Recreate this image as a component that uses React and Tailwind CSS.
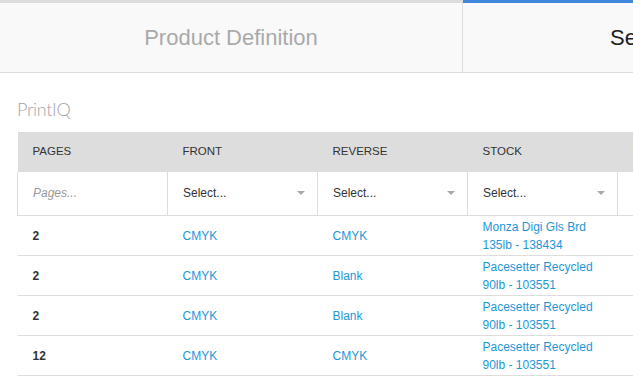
import React from 'react';

const columns = ['Pages', 'Front', 'Reverse', 'Stock', 'Finish'];

const rows = [
    { pages: '2', front: 'CMYK', reverse: 'CMYK', stock: ['Monza Digi Gls Brd', '135lb - 138434'], finish: 'None' },
    { pages: '2', front: 'CMYK', reverse: 'Blank', stock: ['Pacesetter Recycled', '90lb - 103551'], finish: 'None' },
    { pages: '2', front: 'CMYK', reverse: 'Blank', stock: ['Pacesetter Recycled', '90lb - 103551'], finish: 'None' },
    { pages: '12', front: 'CMYK', reverse: 'CMYK', stock: ['Pacesetter Recycled', '90lb - 103551'], finish: 'None' },
];

function SelectCell() {
    return (
        <td className="h-[43px] border-l border-b border-[#dddddd] px-[15px]">
            <div className="flex items-center justify-between text-[12px] text-[#333]">
                <span>Select...</span>
                <span className="mr-[-3px] h-0 w-0 border-l-[4px] border-r-[4px] border-t-[4px] border-l-transparent border-r-transparent border-t-[#aaaaaa]"></span>
            </div>
        </td>
    );
}

export default function App() {
    return (
        <div className="h-[377px] w-full overflow-hidden bg-white" style={{ fontFamily: '"Liberation Sans", Arial, sans-serif' }}>
            <div className="flex h-[73px] border-b border-[#dddddd] bg-[#f9f9f9]">
                <div className="flex w-[463px] shrink-0 items-center justify-center border-t-[3px] border-r border-[#dddddd] text-[22px] text-[#aaaaaa]">
                    Product Definition
                </div>
                <div className="flex w-[463px] shrink-0 items-center border-t-[3px] border-t-[#3f86dc] pl-[147px] text-[22px] text-[#222]">
                    Select Stock
                </div>
            </div>

            <div className="px-[17px] pt-[25px]">
                <div className="mb-[12px] text-[18px] leading-[22px] font-light tracking-[-0.3px] text-[#a3a3a8]" style={{ fontFamily: 'Lato, "Open Sans", sans-serif' }}>
                    PrintIQ
                </div>
                <table className="w-[750px] table-fixed border-collapse">
                    <thead>
                        <tr className="bg-[#dddddd]">
                            {columns.map(c => (
                                <th key={c} className="h-[40px] w-[150px] px-[15px] text-left text-[11.5px] font-normal uppercase text-[#333]">{c}</th>
                            ))}
                        </tr>
                    </thead>
                    <tbody>
                        <tr>
                            <td className="h-[43px] border-l border-b border-[#dddddd] px-[15px] text-[12px] italic text-[#999]">Pages...</td>
                            <SelectCell />
                            <SelectCell />
                            <SelectCell />
                            <SelectCell />
                        </tr>
                        {rows.map((r, i) => (
                            <tr key={i} className="h-[40px] border-b border-[#dddddd] text-[12px]">
                                <td className="px-[15px] pt-[1px] font-bold text-[#333]">{r.pages}</td>
                                <td className="px-[15px] pt-[1px] text-[#1d97d8]">{r.front}</td>
                                <td className="px-[15px] pt-[1px] text-[#1d97d8]">{r.reverse}</td>
                                <td className="px-[15px] pt-[1px] leading-[18px] text-[#1d97d8]">
                                    <div>{r.stock[0]}</div>
                                    <div>{r.stock[1]}</div>
                                </td>
                                <td className="px-[15px] pt-[1px] text-[#1d97d8]">{r.finish}</td>
                            </tr>
                        ))}
                    </tbody>
                </table>
            </div>
        </div>
    );
}
